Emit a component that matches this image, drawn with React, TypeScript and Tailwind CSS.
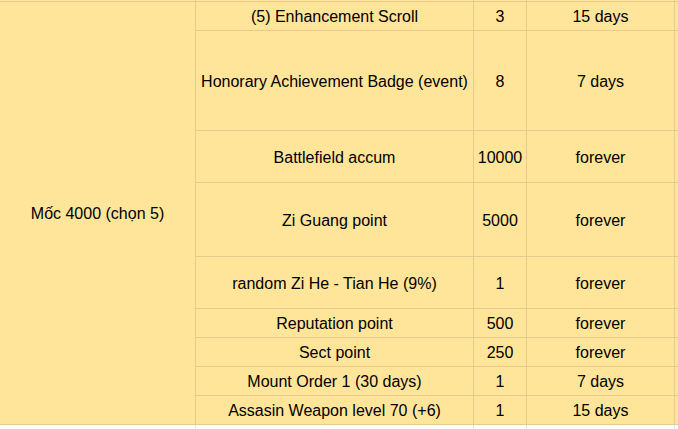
import React from 'react';

type Reward = {
  name: string;
  qty: string;
  duration: string;
};

// phần thưởng mốc 4000
const rewards: Reward[] = [
  { name: '(5) Enhancement Scroll', qty: '3', duration: '15 days' },
  { name: 'Honorary Achievement Badge (event)', qty: '8', duration: '7 days' },
  { name: 'Battlefield accum', qty: '10000', duration: 'forever' },
  { name: 'Zi Guang point', qty: '5000', duration: 'forever' },
  { name: 'random Zi He - Tian He (9%)', qty: '1', duration: 'forever' },
  { name: 'Reputation point', qty: '500', duration: 'forever' },
  { name: 'Sect point', qty: '250', duration: 'forever' },
  { name: 'Mount Order 1 (30 days)', qty: '1', duration: '7 days' },
  { name: 'Assasin Weapon level 70 (+6)', qty: '1', duration: '15 days' },
];

const Cell = ({ children }: { children?: React.ReactNode }) => (
  <div className="bg-[#ffe599] flex items-center justify-center text-center whitespace-nowrap overflow-hidden">
    {children && <span className="translate-y-px">{children}</span>}
  </div>
);

export default function App() {
  return (
    <div
      className="w-[678px] h-[429px] overflow-hidden bg-white text-[16px] text-black leading-none"
      style={{ fontFamily: '"Liberation Sans", Arial, sans-serif' }}
    >
      <div className="grid grid-cols-[195px_277px_52px_147px_1fr] grid-rows-[1px_28px_99px_51px_73px_51px_28px_28px_28px_28px] gap-px pb-px bg-[#e5cb8c]">
        {/* hàng trên bị cắt */}
        <Cell />
        <Cell />
        <Cell />
        <Cell />
        <Cell />

        <div className="col-start-1 row-start-2 row-span-9 bg-[#ffe599] flex items-center justify-center">
          <span className="translate-y-px">Mốc 4000 (chọn 5)</span>
        </div>

        {rewards.map((r) => (
          <React.Fragment key={r.name}>
            <Cell>{r.name}</Cell>
            <Cell>{r.qty}</Cell>
            <Cell>{r.duration}</Cell>
            <Cell />
          </React.Fragment>
        ))}
      </div>

      {/* hàng trắng bên dưới */}
      <div className="grid grid-cols-[195px_277px_52px_147px_1fr] gap-px bg-[#e2e2e2] h-[4px]">
        <div className="bg-white" />
        <div className="bg-white" />
        <div className="bg-white" />
        <div className="bg-white" />
        <div className="bg-white" />
      </div>
    </div>
  );
}
